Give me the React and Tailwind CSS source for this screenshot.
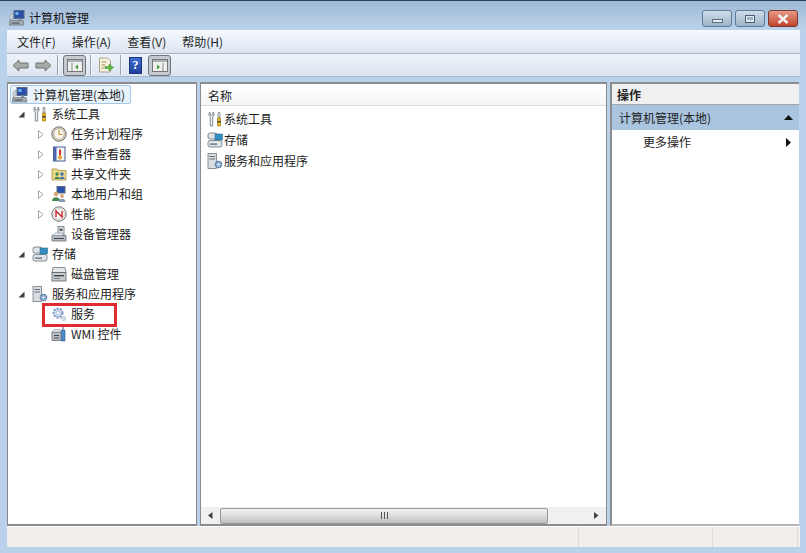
const font = { fontFamily: '"Noto Sans CJK SC", "Noto Sans", sans-serif' };

function ComputerIcon({ className = "w-4 h-4" }) {
  return (
    <svg viewBox="0 0 16 16" className={className}>
      <rect x="5" y="0.500" width="10" height="8" fill="#2a4fa8" stroke="#5a6a80" />
      <rect x="6.500" y="2" width="3" height="3" fill="#6fb0ef" />
      <path d="M9 8.500h3v2H9z" fill="#8a96a5" />
      <path d="M1 10.500h13l1 4.500H0z" fill="#a8adb3" stroke="#5c6268" strokeWidth="0.6" />
      <path d="M2.500 12.500h8v1h-8z" fill="#3e4650" />
      <path d="M1 5l3-2v5l-3 2z" fill="#d5dbe4" stroke="#77808c" strokeWidth="0.5" />
    </svg>
  );
}

function ToolsIcon() {
  return (
    <svg viewBox="0 0 16 16" className="w-4 h-4">
      <path d="M3 1C1.500 2 1.500 5 3.300 6L3.300 15L5.700 15L5.700 6C7.500 5 7.500 2 6 1L6 4L3 4Z" fill="#eef1f3" stroke="#6a737c" strokeWidth="0.8" />
      <path d="M11 1.500h2v5h-2z" fill="#d8dde0" stroke="#6a737c" strokeWidth="0.6" />
      <path d="M10.500 7h3v8h-3z" fill="#f0b818" stroke="#8a6a10" strokeWidth="0.6" />
      <path d="M10.500 10h3v1.500h-3z" fill="#3b3b3b" />
    </svg>
  );
}

function ClockIcon() {
  return (
    <svg viewBox="0 0 16 16" className="w-4 h-4">
      <circle cx="8" cy="8" r="7.200" fill="#d9cfb0" stroke="#6f7378" />
      <circle cx="8" cy="8" r="5.200" fill="#f8f6ee" stroke="#a8a89c" strokeWidth="0.6" />
      <path d="M8 4v4.500h3.500" fill="none" stroke="#c79a30" strokeWidth="1.200" />
    </svg>
  );
}

function EventIcon() {
  return (
    <svg viewBox="0 0 16 16" className="w-4 h-4">
      <rect x="2.500" y="1" width="11.500" height="14" fill="#f3f5fa" stroke="#4c5f92" />
      <path d="M2.500 1h3v14h-3z" fill="#4a66b0" />
      <path d="M9 3.500v6" stroke="#d23a2a" strokeWidth="2" />
      <circle cx="9" cy="11.500" r="2" fill="#e6a52c" />
    </svg>
  );
}

function ShareIcon() {
  return (
    <svg viewBox="0 0 16 16" className="w-4 h-4">
      <path d="M1 3h5l1 1.500h8V14H1z" fill="#ecd98a" stroke="#a98f3c" strokeWidth="0.8" />
      <circle cx="6" cy="8" r="1.700" fill="#3f8a4a" />
      <path d="M3.500 13c0-3 5-3 5 0z" fill="#3f8a4a" />
      <circle cx="11" cy="8" r="1.700" fill="#3d6fb5" />
      <path d="M8.500 13c0-3 5-3 5 0z" fill="#3d6fb5" />
    </svg>
  );
}

function UsersIcon() {
  return (
    <svg viewBox="0 0 16 16" className="w-4 h-4">
      <rect x="6" y="0.500" width="8" height="6.500" fill="#2a4fa8" stroke="#5a6a80" />
      <circle cx="5" cy="8" r="2.300" fill="#d8a87a" />
      <path d="M1 15c0-5 8-5 8 0z" fill="#3f8a4a" />
      <circle cx="11" cy="10" r="2" fill="#d8a87a" />
      <path d="M7.500 16c0-4.500 7-4.500 7 0z" fill="#8a98b8" />
    </svg>
  );
}

function PerfIcon() {
  return (
    <svg viewBox="0 0 16 16" className="w-4 h-4">
      <circle cx="8" cy="8" r="7.200" fill="#f3efe6" stroke="#6f7378" />
      <circle cx="8" cy="8" r="5.300" fill="#fff" stroke="#b5b0a2" strokeWidth="0.6" />
      <path d="M5 11V5l6 6V5" fill="none" stroke="#c8282c" strokeWidth="1.400" />
    </svg>
  );
}

function DeviceIcon() {
  return (
    <svg viewBox="0 0 16 16" className="w-4 h-4">
      <rect x="7" y="0.500" width="6" height="9" fill="#dfe3e6" stroke="#6a737c" strokeWidth="0.8" />
      <rect x="8.500" y="2.500" width="3" height="2.500" fill="#59636e" />
      <path d="M1 9.500h14v5.500H1z" fill="#b5bbc2" stroke="#5c6268" strokeWidth="0.7" />
      <path d="M1 9.500L4 7h8v2.500z" fill="#e6e9ec" stroke="#7c838a" strokeWidth="0.5" />
      <path d="M3 12h10v1H3z" fill="#3e4650" />
    </svg>
  );
}

function StorageIcon() {
  return (
    <svg viewBox="0 0 16 16" className="w-4 h-4">
      <rect x="1" y="1" width="9" height="6" rx="2" fill="#dfe4e8" stroke="#6a737c" strokeWidth="0.8" />
      <rect x="1" y="8.500" width="14" height="6.500" rx="2" fill="#dfe4e8" stroke="#6a737c" strokeWidth="0.8" />
      <rect x="8" y="2" width="7.500" height="6" fill="#2f8fc4" stroke="#3b6a8a" strokeWidth="0.6" />
      <path d="M3 11.500h7v1.200H3z" fill="#59636e" />
    </svg>
  );
}

function DiskIcon() {
  return (
    <svg viewBox="0 0 16 16" className="w-4 h-4">
      <path d="M2 1.500h12l1 5H1z" fill="#e2e5e7" stroke="#6f767c" strokeWidth="0.8" />
      <rect x="1" y="6.500" width="14" height="8.500" fill="#c6cacd" stroke="#5c6268" strokeWidth="0.8" />
      <path d="M3 9h10v1.400H3z" fill="#3e4650" />
      <path d="M3 12h6v1H3z" fill="#7b838a" />
    </svg>
  );
}

function ServerAppIcon() {
  return (
    <svg viewBox="0 0 16 16" className="w-4 h-4">
      <rect x="1" y="0.500" width="8.500" height="15" fill="#d9dde1" stroke="#747b82" strokeWidth="0.8" />
      <path d="M2.500 3h5.500v1H2.500zM2.500 5.500h5.500v1H2.500z" fill="#69727a" />
      <circle cx="11.500" cy="11.500" r="3.200" fill="#8fb0d8" stroke="#4f6f9a" strokeWidth="1.200" strokeDasharray="1.500 0.700" />
      <circle cx="11.500" cy="11.500" r="1" fill="#fff" />
    </svg>
  );
}

function GearIcon() {
  return (
    <svg viewBox="0 0 16 16" className="w-4 h-4">
      <circle cx="7" cy="7" r="4.500" fill="#cfdcec" stroke="#7d9ac0" strokeWidth="2" strokeDasharray="2 1.200" />
      <circle cx="7" cy="7" r="1.800" fill="#fff" stroke="#9cb2cf" strokeWidth="0.6" />
      <circle cx="12.500" cy="12.500" r="2" fill="#dbe5f1" stroke="#8aa4c6" strokeWidth="1" strokeDasharray="1 0.700" />
    </svg>
  );
}

function WmiIcon() {
  return (
    <svg viewBox="0 0 16 16" className="w-4 h-4">
      <path d="M1 6h9v8.500H1z" fill="#b9bec3" stroke="#5c6268" strokeWidth="0.7" />
      <path d="M3 9h5v1H3zM3 11.500h5v1H3z" fill="#3e4650" />
      <path d="M1 6l2-2.500h6L10 6z" fill="#e2e5e7" stroke="#7c838a" strokeWidth="0.5" />
      <path d="M10.500 4h3.500v11h-3.500z" fill="#4f8ac8" stroke="#31598a" strokeWidth="0.6" />
      <path d="M12 1v3" stroke="#6a737c" strokeWidth="1.200" />
    </svg>
  );
}

function Arrow({ open, hidden }) {
  if (hidden) return <span className="w-[9px] h-[9px] shrink-0" />;
  return (
    <svg viewBox="0 0 9 9" className="w-[9px] h-[9px] shrink-0">
      {open ? (
        <path d="M7.500 1.500V7.500H1.500Z" fill="#404040" />
      ) : (
        <path d="M2.500 0.500L7 4.500L2.500 8.500Z" fill="#fff" stroke="#a6a6a6" />
      )}
    </svg>
  );
}

const tree = [
  { level: 1, open: true, icon: <ToolsIcon />, text: "系统工具" },
  { level: 2, icon: <ClockIcon />, text: "任务计划程序" },
  { level: 2, icon: <EventIcon />, text: "事件查看器" },
  { level: 2, icon: <ShareIcon />, text: "共享文件夹" },
  { level: 2, icon: <UsersIcon />, text: "本地用户和组" },
  { level: 2, icon: <PerfIcon />, text: "性能" },
  { level: 2, leaf: true, icon: <DeviceIcon />, text: "设备管理器" },
  { level: 1, open: true, icon: <StorageIcon />, text: "存储" },
  { level: 2, leaf: true, icon: <DiskIcon />, text: "磁盘管理" },
  { level: 1, open: true, icon: <ServerAppIcon />, text: "服务和应用程序" },
  { level: 2, leaf: true, icon: <GearIcon />, text: "服务" },
  { level: 2, leaf: true, icon: <WmiIcon />, text: "WMI 控件" },
];

function TreeRow({ row }) {
  return (
    <div className={`flex items-center h-5 ${row.level === 1 ? "pl-[9px]" : "pl-[28px]"}`}>
      <Arrow open={row.open} hidden={row.leaf} />
      <span className="ml-[6px] mr-[4px] w-4 h-4 shrink-0">{row.icon}</span>
      <span className="text-[12px] leading-5 text-[#1c1c1c]">{row.text}</span>
    </div>
  );
}

function WinButton({ className, children }) {
  return (
    <div className={`h-[17px] w-[30px] rounded-[3px] border border-[#5e7a96] flex items-center justify-center ${className}`}>
      {children}
    </div>
  );
}

function ToolToggle({ right }) {
  return (
    <div className="w-[23px] h-[21px] rounded-[3px] border border-[#6f7478] bg-[#c4cad0] flex items-center justify-center">
      <svg viewBox="0 0 16 13" className="w-4 h-[13px]">
        <rect x="0.500" y="0.500" width="15" height="12" fill="#eef0f0" stroke="#777" />
        <path d="M1 1h14v2H1z" fill="#a9b0b6" />
        {right ? (
          <>
            <path d="M11 4v8" stroke="#888" />
            <path d="M5 5.500l3 2.500-3 2.500z" fill="#3c9a3c" />
          </>
        ) : (
          <>
            <path d="M5 4v8" stroke="#888" />
            <path d="M11 5.500l-3 2.500 3 2.500z" fill="#3c9a3c" />
          </>
        )}
      </svg>
    </div>
  );
}

function Sep() {
  return <div className="w-px h-5 bg-[#98a3ad] border-r border-[#f2f4f6] box-content" />;
}

export default function App() {
  return (
    <div style={font} className="w-[806px] h-[553px] overflow-hidden flex flex-col bg-[#b9d1ea] border-t border-[#2c3e50]">
      <div className="h-[29px] shrink-0 flex items-start justify-between pl-[9px] pr-[8px] bg-gradient-to-b from-[#9db9d6] to-[#bcd3ea]">
        <div className="flex items-center gap-[4px] mt-[8px]">
          <ComputerIcon />
          <span className="text-[12px] text-[#111]">计算机管理</span>
        </div>
        <div className="flex items-center gap-[3px] mt-[9px]">
          <WinButton className="bg-gradient-to-b from-[#cfdde9] to-[#9db4c9]">
            <div className="w-[11px] h-[4px] mt-[5px] bg-[#e6edf4] border border-[#5f6f80]" />
          </WinButton>
          <WinButton className="bg-gradient-to-b from-[#cfdde9] to-[#9db4c9]">
            <div className="w-[10px] h-[8px] bg-[#dfe7ef] border border-[#4f5f70] flex items-center justify-center">
              <div className="w-[6px] h-[3px] bg-[#9db4c9]" />
            </div>
          </WinButton>
          <WinButton className="bg-gradient-to-b from-[#e79a88] to-[#c0432e] border-[#7a3a30]">
            <svg viewBox="0 0 12 10" className="w-3 h-[10px]">
              <path d="M1.500 1l9 8M10.500 1l-9 8" stroke="#f4f4f4" strokeWidth="2.400" />
            </svg>
          </WinButton>
        </div>
      </div>

      <div className="flex-1 min-h-0 mr-[6px] ml-[7px] flex flex-col">
        <div className="h-[24px] shrink-0 flex items-center gap-[16px] pl-[10px] text-[12px] text-[#1e1e1e] bg-gradient-to-b from-[#f6f9fd] to-[#dbe5f2] border-b border-[#a9b6c4]">
          <span>文件(F)</span>
          <span>操作(A)</span>
          <span>查看(V)</span>
          <span>帮助(H)</span>
        </div>
        <div className="h-[23px] shrink-0 flex items-center pl-[5px] bg-gradient-to-b from-[#eef3f9] to-[#dbe5f1] border-b border-[#aab7c5]">
          <svg viewBox="0 0 17 13" className="w-[17px] h-[13px]">
            <path d="M1 6.500L7 1v3h9v5H7v3z" fill="#a8aca8" stroke="#6f736f" />
          </svg>
          <svg viewBox="0 0 17 13" className="w-[17px] h-[13px] ml-[6px]">
            <path d="M16 6.500L10 1v3H1v5h9v3z" fill="#a8aca8" stroke="#6f736f" />
          </svg>
          <div className="ml-[5px] mr-[4px]"><Sep /></div>
          <ToolToggle />
          <div className="ml-[4px] mr-[5px]"><Sep /></div>
          <svg viewBox="0 0 17 16" className="w-[17px] h-4">
            <path d="M2.500 1h8l3 3v11h-11z" fill="#f6f3e2" stroke="#a8a08a" />
            <path d="M4.500 5h5M4.500 8h4M4.500 11h3" stroke="#a08a50" />
            <path d="M8 9.500h4V7l4.500 3.500L12 14v-2.500H8z" fill="#5cb83c" stroke="#3d8a28" strokeWidth="0.5" />
          </svg>
          <div className="ml-[6px] mr-[7px]"><Sep /></div>
          <div className="w-[13px] h-[17px] bg-gradient-to-b from-[#3e6fd0] to-[#20409a] text-white text-[12px] font-bold leading-[15px] text-center border border-[#1d3580]" style={{ fontFamily: '"Liberation Serif", serif' }}>?</div>
          <div className="ml-[6px]"><ToolToggle right /></div>
        </div>

        <div className="flex-1 min-h-0 flex gap-[3px] pt-[5px] pr-[1px]">
          <div className="relative w-[190px] shrink-0 bg-white border-t-2 border-l border-r border-b-2 border-[#8c8c8c]">
            <div className="h-[19px] mt-[1px] flex items-center ml-[2px] w-[121px] rounded-[2px] border border-[#a5c8e8] bg-[#eaf3fb]">
              <span className="ml-[1px] mr-[5px] w-4 h-4 shrink-0"><ComputerIcon /></span>
              <span className="text-[12px] leading-5 text-[#1c1c1c]">计算机管理(本地)</span>
            </div>
            <div>
              {tree.map((row) => (
                <TreeRow key={row.text} row={row} />
              ))}
            </div>
            <div className="absolute left-[34px] top-[219px] w-[75px] h-[24px] border-[3px] border-[#df2c30]" />
          </div>

          <div className="w-[407px] shrink-0 bg-white border-t-2 border-l border-r border-b-2 border-[#8c8c8c] flex flex-col">
            <div className="h-[22px] shrink-0 flex items-center pl-[7px] pt-[2px] text-[12px] text-[#222] border-b border-[#d8dbde] bg-gradient-to-b from-white to-[#f5f6f7]">名称</div>
            <div className="flex-1 pt-[2px]">
              <div className="flex items-center h-[21px] pl-[6px] gap-[1px] text-[12px] text-[#1c1c1c]"><ToolsIcon />系统工具</div>
              <div className="flex items-center h-[21px] pl-[6px] gap-[1px] text-[12px] text-[#1c1c1c]"><StorageIcon />存储</div>
              <div className="flex items-center h-[21px] pl-[6px] gap-[1px] text-[12px] text-[#1c1c1c]"><ServerAppIcon />服务和应用程序</div>
            </div>
            <div className="h-[17px] shrink-0 flex items-center bg-[#f0f0f0]">
              <div className="w-[19px] flex justify-center">
                <svg viewBox="0 0 5 7" className="w-[5px] h-[7px]"><path d="M4.500 0v7L0 3.500z" fill="#444" /></svg>
              </div>
              <div className="w-[328px] h-[16px] rounded-[2px] border border-[#9a9a9a] bg-gradient-to-b from-[#f2f2f2] via-[#dcdcdc] to-[#bcbcbc] flex items-center justify-center">
                <div className="w-[7px] h-[7px] border-l border-r border-[#555] flex justify-center">
                  <div className="w-px h-full bg-[#555]" />
                </div>
              </div>
              <div className="flex-1 flex justify-end pr-[7px]">
                <svg viewBox="0 0 5 7" className="w-[5px] h-[7px]"><path d="M0 0v7l4.500-3.500z" fill="#444" /></svg>
              </div>
            </div>
          </div>

          <div className="flex-1 bg-white border-t-2 border-l-2 border-b-2 border-[#8c8c8c] border-b-[#b5b5b5] flex flex-col">
            <div className="h-[21px] shrink-0 flex items-center pl-[5px] pt-[2px] text-[12px] font-bold text-[#222] bg-[#f0f0f0] border-b border-[#9fa5ab]">操作</div>
            <div className="h-[25px] shrink-0 flex items-center justify-between pl-[7px] pr-[6px] text-[12px] text-[#222] bg-[#aac5df]">
              <span>计算机管理(本地)</span>
              <svg viewBox="0 0 9 5" className="w-[9px] h-[5px]"><path d="M4.500 0L9 5H0z" fill="#111" /></svg>
            </div>
            <div className="h-[24px] shrink-0 flex items-center justify-between pl-[31px] pr-[8px] text-[12px] text-[#222]">
              <span>更多操作</span>
              <svg viewBox="0 0 5 9" className="w-[5px] h-[9px]"><path d="M0 0l5 4.500L0 9z" fill="#111" /></svg>
            </div>
          </div>
        </div>

        <div className="h-[21px] shrink-0 flex bg-[#f0edeb] border-t border-white">
          <div className="w-[572px] border-r border-[#dcd9d6]" />
          <div className="w-[134px] border-r border-[#dcd9d6]" />
          <div className="w-[85px] border-r border-[#dcd9d6]" />
        </div>
        <div className="h-[6px] shrink-0 bg-[#b9d1ea]" />
      </div>
    </div>
  );
}
